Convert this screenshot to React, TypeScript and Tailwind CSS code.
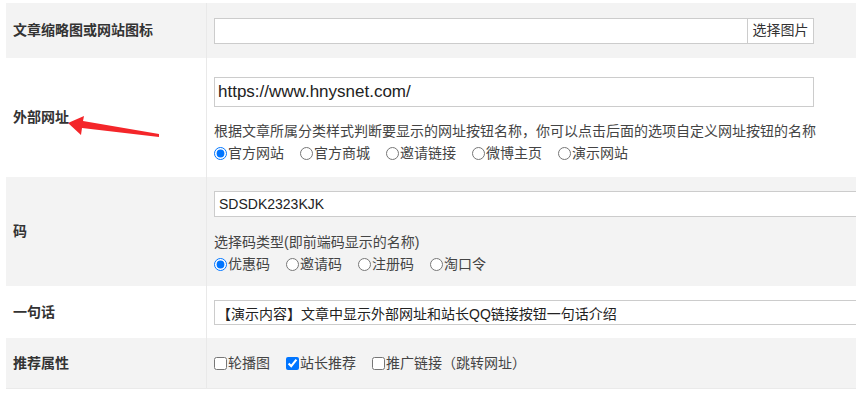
import React from "react";

const cn = '"Liberation Sans", Arial, "Noto Sans CJK SC", sans-serif';

const siteOptions = ["官方网站", "官方商城", "邀请链接", "微博主页", "演示网站"];
const codeOptions = ["优惠码", "邀请码", "注册码", "淘口令"];

function Row({ label, gray, h, children, center = true, pt = 0 }: { label: string; gray?: boolean; h: number; children: React.ReactNode; center?: boolean; pt?: number }) {
  return (
    <div className={`flex ${gray ? "bg-[#f3f3f3]" : "bg-white"}`} style={{ height: h }}>
      <div className="w-[200px] shrink-0 flex items-center pl-[7px] text-[14px] font-bold text-[#333]">{label}</div>
      <div
        className={`flex-1 border-l border-[#e9e9e9] pl-[7px] flex flex-col ${center ? "justify-center" : ""}`}
        style={{ paddingTop: pt }}
      >
        {children}
      </div>
    </div>
  );
}

function Radio({ name, label, checked }: { name: string; label: string; checked?: boolean }) {
  return (
    <label className="flex items-center mr-[16px]">
      <input type="radio" name={name} defaultChecked={checked} className="m-0 mr-[1px] w-[13px] h-[13px]" />
      <span>{label}</span>
    </label>
  );
}

function Check({ label, checked }: { label: string; checked?: boolean }) {
  return (
    <label className="flex items-center mr-[16px]">
      <input type="checkbox" defaultChecked={checked} className="m-0 mr-[1px] w-[13px] h-[13px]" />
      <span>{label}</span>
    </label>
  );
}

export default function App() {
  return (
    <div className="w-[856px] h-[393px] overflow-hidden bg-white pt-[3px] pl-[6px] text-[#333]" style={{ fontFamily: cn }}>
      <div className="w-[900px] border-b border-[#eaeaea]">
        <Row label="文章缩略图或网站图标" gray h={55}>
          <div className="flex h-[26px] w-[600px]">
            <input className="flex-1 h-full border border-[#ccc] bg-white outline-none" />
            <button className="h-full w-[66px] border border-l-0 border-[#ccc] bg-white text-[14px] text-[#333]">选择图片</button>
          </div>
        </Row>

        <Row label="外部网址" h={119} center={false} pt={19}>
          <input
            defaultValue="https://www.hnysnet.com/"
            className="w-[600px] h-[30px] border border-[#ccc] bg-white px-[3px] text-[17px] text-[#222] outline-none"
          />
          <div className="mt-[13px] text-[14px] leading-[22px] text-[#444]">
            根据文章所属分类样式判断要显示的网址按钮名称，你可以点击后面的选项自定义网址按钮的名称
          </div>
          <div className="flex text-[14px] leading-[22px] text-[#444]">
            {siteOptions.map((o, i) => (
              <Radio key={o} name="site" label={o} checked={i === 0} />
            ))}
          </div>
        </Row>

        <Row label="码" gray h={109} center={false} pt={14}>
          <input
            defaultValue="SDSDK2323KJK"
            className="w-[700px] h-[26px] border border-[#ccc] bg-white px-[4px] text-[14px] text-[#222] outline-none"
          />
          <div className="mt-[14px] text-[14px] leading-[22px] text-[#444]">选择码类型(即前端码显示的名称)</div>
          <div className="flex text-[14px] leading-[22px] text-[#444]">
            {codeOptions.map((o, i) => (
              <Radio key={o} name="code" label={o} checked={i === 0} />
            ))}
          </div>
        </Row>

        <Row label="一句话" h={52} center={false} pt={14}>
          <input
            defaultValue="【演示内容】文章中显示外部网址和站长QQ链接按钮一句话介绍"
            className="w-[700px] h-[25px] border border-[#ccc] bg-white px-[2px] text-[14px] text-[#222] outline-none"
          />
        </Row>

        <Row label="推荐属性" gray h={50}>
          <div className="flex text-[14px] leading-[22px] text-[#444]">
            <Check label="轮播图" />
            <Check label="站长推荐" checked />
            <Check label="推广链接（跳转网址）" />
          </div>
        </Row>
      </div>

      {/* red annotation arrow */}
      <svg className="absolute left-0 top-0 pointer-events-none" width="856" height="393">
        <polygon points="68,123 84,116 83,121 159,134 159,137 82,128 81,135" fill="#f4262a" />
      </svg>
    </div>
  );
}
